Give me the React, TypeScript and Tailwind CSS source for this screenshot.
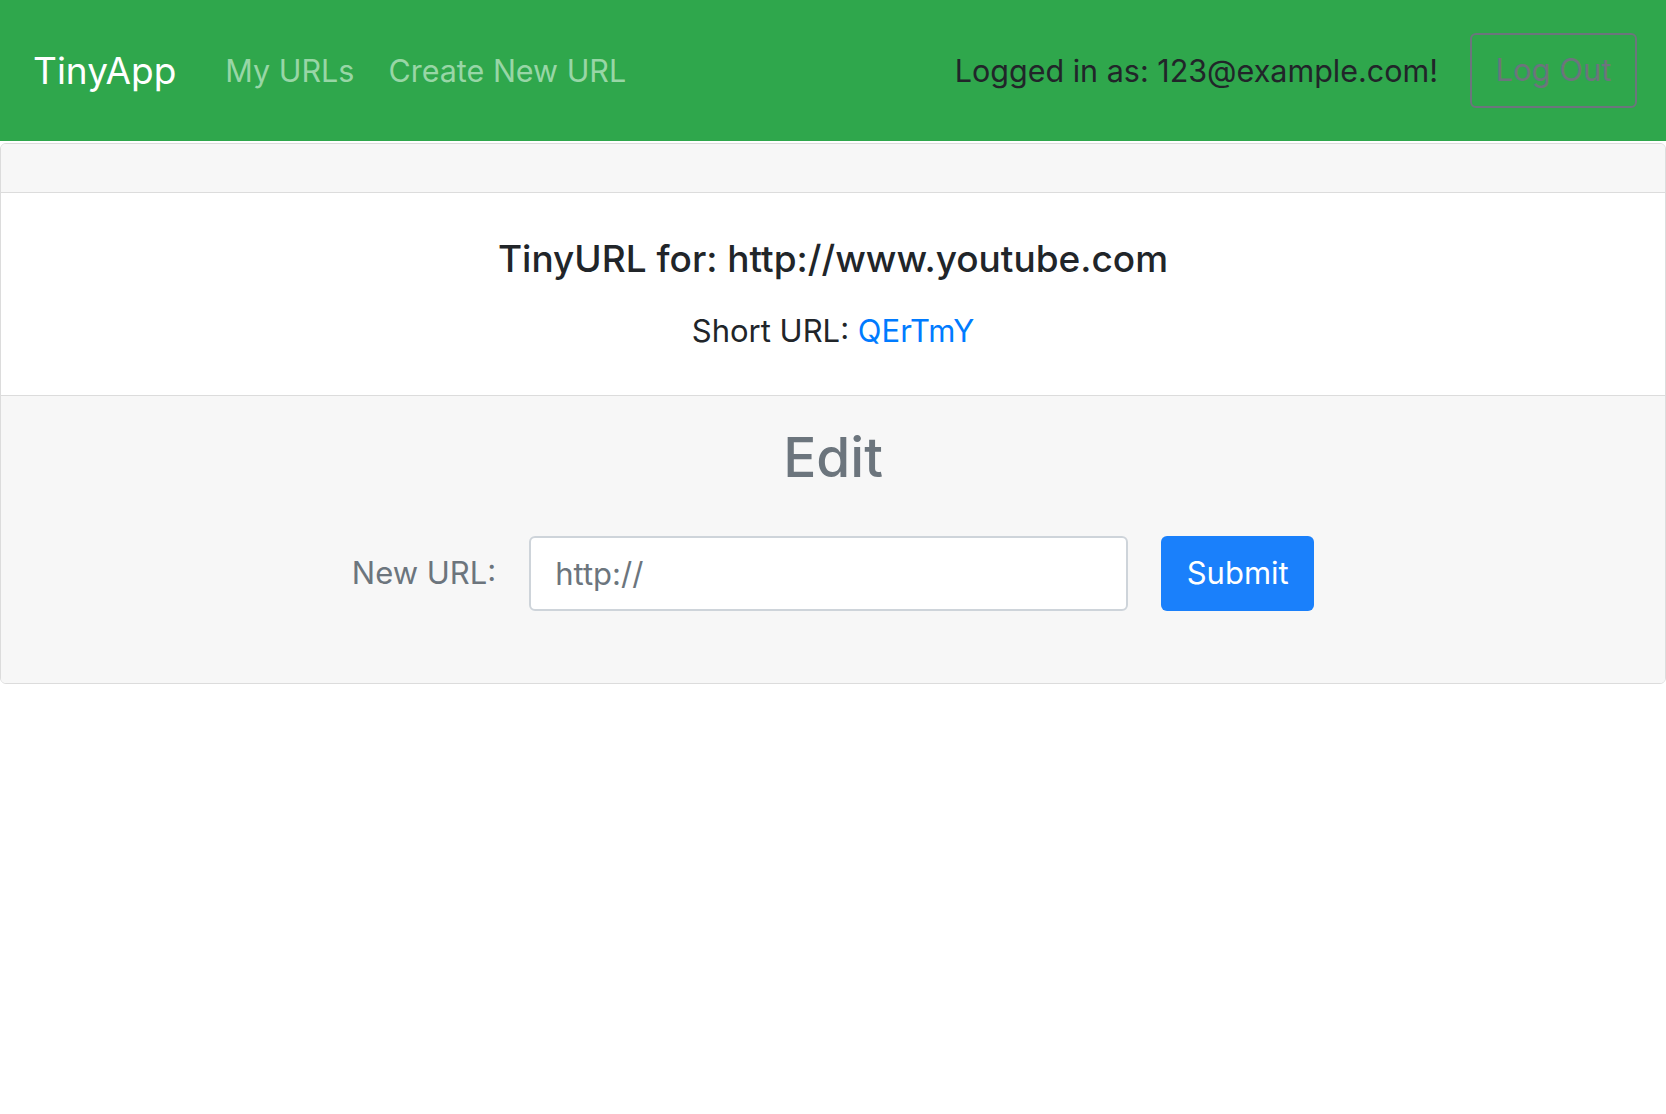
export default function App() {
  return (
    <div className="min-h-screen bg-white font-['Inter','Liberation_Sans',sans-serif] text-[#212529]">
      <nav className="flex h-[141px] items-center bg-[#2fa74c] pl-[33px] pr-[29px]">
        <a className="text-[37px] text-white">TinyApp</a>
        <div className="ml-[49px] flex gap-[34px] text-[30.5px] text-[#98d6a6]">
          <a>My URLs</a>
          <a>Create New URL</a>
        </div>
        <div className="ml-auto flex items-center gap-[32px]">
          <span className="text-[30.5px] text-[#212529]">Logged in as: 123@example.com!</span>
          <button className="h-[75px] w-[167px] rounded-[6px] border-2 border-[#6c757d] text-[31px] text-[#6c757d]">
            Log Out
          </button>
        </div>
      </nav>

      <div className="mt-[2px] overflow-hidden rounded-[6px] border border-[#dcdcdc]">
        <div className="h-[49px] border-b border-[#dcdcdc] bg-[#f7f7f7]" />
        <div className="flex h-[202px] flex-col items-center pt-[44px]">
          <h5 className="text-[37px] font-medium leading-[1.2]">
            TinyURL for: http://www.youtube.com
          </h5>
          <p className="mt-[31px] text-[31px] leading-[1.2]">
            Short URL: <a className="text-[#007bff]">QErTmY</a>
          </p>
        </div>
        <div className="flex h-[288px] flex-col items-center border-t border-[#dcdcdc] bg-[#f7f7f7] pt-[28px]">
          <h2 className="text-[55px] font-medium leading-[1.2] text-[#6c757d]">Edit</h2>
          <form className="mt-[46px] flex items-center">
            <label className="text-[31px] text-[#6c757d]">New URL:</label>
            <input
              className="ml-[33px] h-[75px] w-[599px] rounded-[6px] border-2 border-[#ced4da] bg-white px-[24px] text-[31px] text-[#495057] placeholder:text-[#6c757d] outline-none"
              placeholder="http://"
            />
            <button
              type="button"
              className="ml-[33px] h-[75px] w-[153px] rounded-[6px] bg-[#1a80fb] text-[31px] text-white"
            >
              Submit
            </button>
          </form>
        </div>
      </div>
    </div>
  );
}
